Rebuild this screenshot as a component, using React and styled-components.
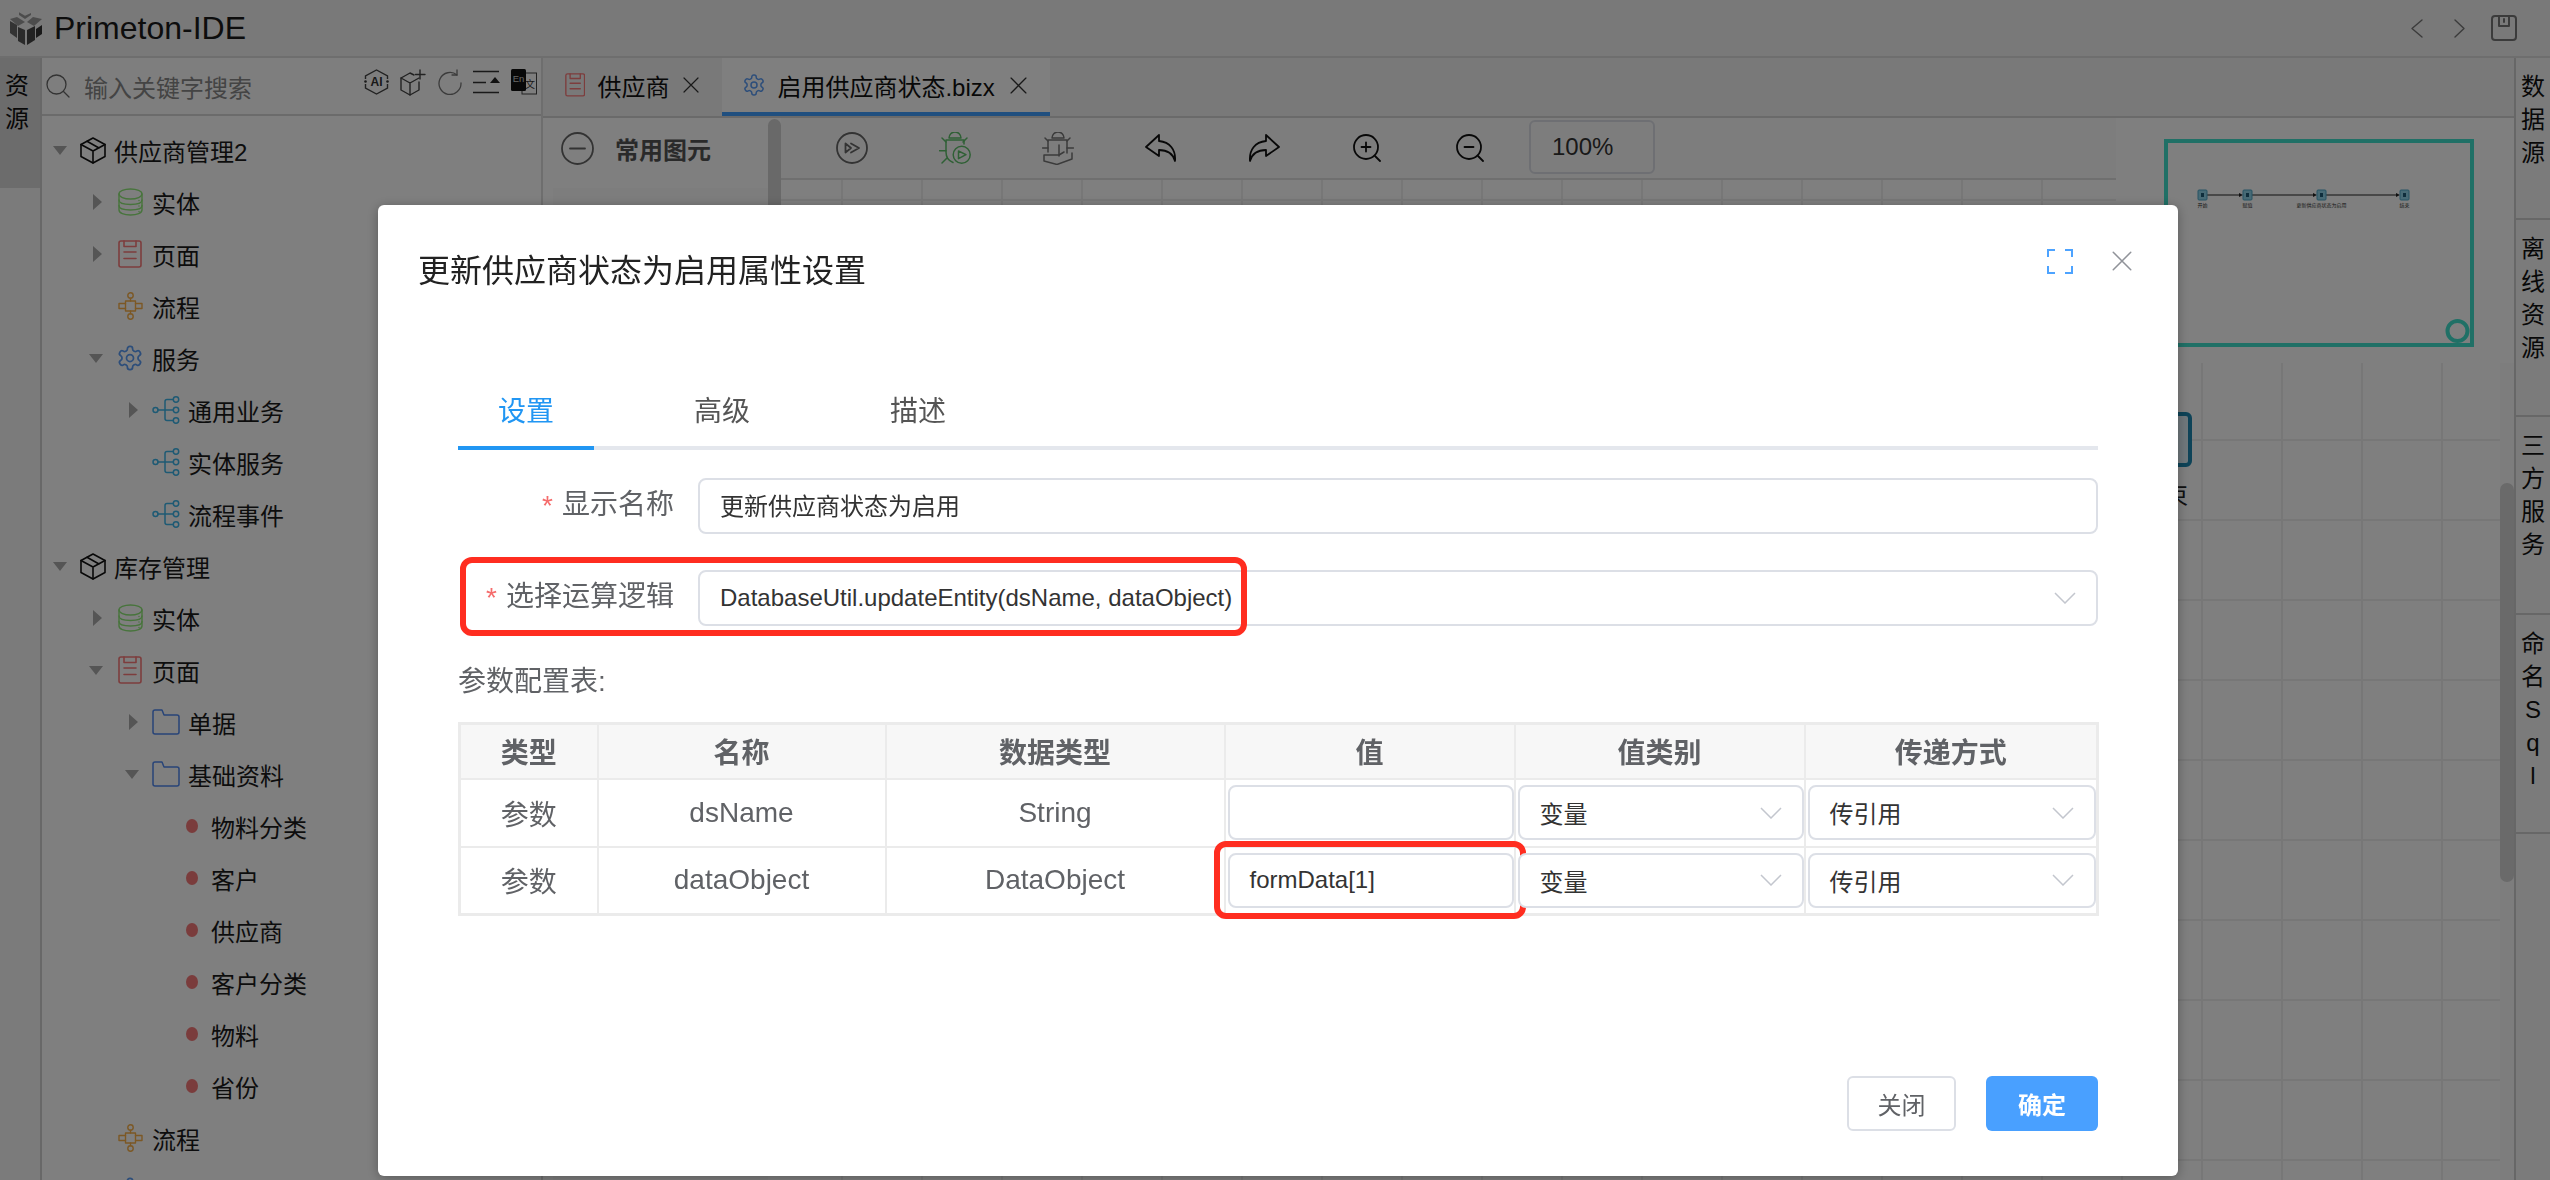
import React from 'react';
import styled, { createGlobalStyle } from 'styled-components';

const Global = createGlobalStyle`
  html, body { margin: 0; padding: 0; height: 100%; overflow: hidden; background: #fff; }
  body { font-family: "Liberation Sans", "Noto Sans CJK SC", sans-serif; color: #1a1a1a; }
  * { box-sizing: border-box; }
`;

const Page = styled.div`
  width: 100vw; height: 100vh; display: flex; flex-direction: column; overflow: hidden;
`;
const Header = styled.header`
  height: 58px; flex: none; display: flex; align-items: center; padding: 0 33px 0 9px;
  background: #f2f2f2; border-bottom: 2px solid #dcdcdc;
`;
const AppTitle = styled.div`font-size: 32px; margin-left: 11px; color: #1a1a1a;`;
const HeaderTools = styled.div`
  margin-left: auto; display: flex; align-items: center; color: #777; gap: 26px;
`;
const Pager = styled.span`display: flex; gap: 31px;`;
const Body = styled.div`flex: 1; display: flex; min-height: 0;`;

const LeftRail = styled.nav`
  width: 42px; flex: none; background: #f6f6f6; border-right: 2px solid #d0d0d0;
`;
const RailTab = styled.div`
  height: 130px; padding: 11px 6px 0 0; background: ${p => (p.$active ? '#d9d9d9' : 'transparent')};
`;
const RailChar = styled.span`
  display: block; font-size: 24px; line-height: 33px; text-align: center; color: #111;
`;

const TreePanel = styled.aside`
  width: 501px; flex: none; display: flex; flex-direction: column; overflow: hidden;
  background: #fff; border-right: 2px solid #dcdcdc;
`;
const SearchRow = styled.div`
  height: 58px; flex: none; display: flex; align-items: center; padding: 0 4px 0 4px;
  background: #fdfdfd; border-bottom: 2px solid #d6d6d6;
`;
const Placeholder = styled.span`font-size: 24px; color: #888; margin-left: 14px;`;
const SearchTools = styled.div`
  margin-left: auto; display: flex; gap: 11px; align-items: center; margin-bottom: 8px;
`;
const TreeList = styled.div`flex: 1; padding-top: 8px; overflow: hidden; position: relative;`;
const TreeRow = styled.div`
  height: 52px; display: flex; align-items: center; padding-left: ${p => 10 + p.$level * 36}px;
`;
const CaretSlot = styled.span`
  width: 16px; flex: none; margin-right: 12px; display: flex; justify-content: center;
`;
const Caret = styled.i`
  display: block; width: 0; height: 0;
  ${p => (p.$dir === 'down'
    ? 'border-left: 7px solid transparent; border-right: 7px solid transparent; border-top: 9px solid #aaa;'
    : 'margin-left: 3px; border-top: 8px solid transparent; border-bottom: 8px solid transparent; border-left: 9px solid #aaa;')}
`;
const IconSlot = styled.span`
  width: ${p => p.$w}px; flex: none; display: flex; justify-content: center;
`;
const TreeLabel = styled.span`font-size: 24px; margin-left: 8px; color: #1a1a1a; white-space: nowrap;`;
const LeafDot = styled.i`
  display: block; width: 12px; height: 14px; border-radius: 50%; background: #f47878;
  margin: 0 5px 0 -2px; flex: none;
`;

const Main = styled.main`flex: 1; min-width: 0; display: flex; flex-direction: column;`;
const TabBar = styled.div`
  height: 60px; flex: none; display: flex; background: #f2f2f2; border-bottom: 2px solid #d4d4d4;
`;
const FileTab = styled.div`
  height: 58px; display: flex; align-items: center; padding: 0 23px 0 ${p => (p.$active ? 20 : 22)}px;
  font-size: 24px; color: #111; background: ${p => (p.$active ? '#fff' : 'transparent')};
  border-bottom: 4px solid ${p => (p.$active ? '#409eff' : 'transparent')};
`;
const FileTabLabel = styled.span`margin: 0 ${p => (p.$active ? 15 : 14)}px 0 ${p => (p.$active ? 11 : 12)}px;`;

const Editor = styled.div`flex: 1; display: flex; min-height: 0;`;
const Palette = styled.div`
  width: 238px; flex: none; display: flex; background: #fff; position: relative;
`;
const PaletteInner = styled.div`flex: 1; min-width: 0; display: flex; flex-direction: column;`;
const PaletteHead = styled.div`
  height: 70px; flex: none; display: flex; align-items: center; padding: 0 0 10px 18px; gap: 21px;
  font-size: 24px; font-weight: 700; color: #555;
`;
const PaletteBlock = styled.div`flex: 1; margin-left: 10px; background: #fafafa;`;
const PaletteThumb = styled.div`
  width: 13px; height: 200px; margin-top: 1px; flex: none; background: #d2d2d2; border-radius: 7px;
`;
const Workspace = styled.div`flex: 1; min-width: 0; display: flex; flex-direction: column; position: relative;`;
const Toolbar = styled.div`
  height: 62px; flex: none; display: flex; align-items: center; padding-left: 55px; gap: 71px;
  background: #fbfbfb; border-bottom: 2px solid #dedede;
`;
const ToolIcon = styled.span`width: 32px; height: 34px; flex: none; display: flex; justify-content: center; align-items: center;`;
const ZoomBox = styled.div`
  width: 126px; height: 54px; margin: -2px 0 0 -28px; border: 2px solid #dcdfe6; border-radius: 6px;
  display: flex; align-items: center; padding-left: 21px; font-size: 24px; color: #333;
`;
const Canvas = styled.div`flex: 1; display: flex; min-height: 0;`;
const GridArea = styled.div`
  flex: 1; position: relative;
  background-color: #fff;
  background-image: linear-gradient(#efefef 2px, transparent 2px), linear-gradient(90deg, #efefef 2px, transparent 2px);
  background-size: 80px 80px;
  background-position: 60px 19px;
`;
const FlowNode = styled.div`
  position: absolute; left: 1356px; top: 232px; width: 55px; height: 55px; border: 4px solid #1c87b0;
  border-radius: 6px; background: #dff0f8;
`;
const FlowLabel = styled.div`
  position: absolute; left: 1359px; top: 296px; font-size: 24px; color: #222;
`;
const ScrollTrack = styled.div`width: 14px; flex: none; background: #fafafa;`;
const ScrollThumb = styled.div`margin-top: 303px; height: 399px; border-radius: 7px; background: #d4d4d4;`;
const MiniPanel = styled.div`
  position: absolute; top: 0; right: 0; width: 398px; height: 245px; background: #fff;
  padding: 21px 0 0 48px;
`;
const MiniMap = styled.svg`display: block;`;

const RightRail = styled.nav`
  width: 36px; flex: none; background: #f6f6f6; border-left: 2px solid #cfcfcf; padding-left: 0;
`;
const RailSection = styled.div`
  height: ${p => p.$h}px; padding-top: 12px; border-bottom: 2px solid #cfcfcf;
`;

/* dialog */
const Overlay = styled.div`
  position: fixed; inset: 0; background: rgba(0, 0, 0, 0.5); display: flex; align-items: flex-start;
  padding: 205px 0 0 378px;
`;
const Modal = styled.section`
  width: 1800px; height: 971px; background: #fff; border-radius: 6px; display: flex; flex-direction: column;
  box-shadow: 0 2px 12px rgba(0, 0, 0, 0.3);
`;
const ModalHead = styled.div`
  height: 126px; flex: none; display: flex; align-items: center; padding: 0 46px 0 40px;
`;
const ModalTitle = styled.h2`margin: 0; font-size: 32px; font-weight: 400; color: #222;`;
const ModalTools = styled.div`margin: -14px 0 0 auto; display: flex; align-items: center; gap: 39px;`;
const ModalBody = styled.div`flex: 1; padding: 45px 80px 0;`;
const TabNav = styled.div`display: flex; gap: 60px; border-bottom: 4px solid #e4e7ed;`;
const DialogTab = styled.div`
  width: 136px; height: 74px; margin-bottom: -4px; padding-bottom: 4px; display: flex; align-items: center; justify-content: center;
  font-size: 28px; color: ${p => (p.$active ? '#2196f3' : '#555')};
  border-bottom: 4px solid ${p => (p.$active ? '#2196f3' : 'transparent')};
`;
const FormRow = styled.div`
  display: flex; margin-top: ${p => p.$top}px; position: relative;
`;
const FormLabel = styled.label`
  width: 240px; flex: none; padding: 0 24px 8px 0; display: flex; align-items: center; justify-content: flex-end;
  font-size: 28px; color: #606266;
`;
const Star = styled.span`color: #f56c6c; margin-right: 9px; position: relative; top: 4px;`;
const Field = styled.div`
  flex: 1; height: ${p => p.$h || 56}px; border: 2px solid #dcdfe6; border-radius: 8px; background: #fff;
  display: flex; align-items: center; padding: 0 20px ${p => (p.$lift ? 3 : 0)}px; font-size: 24px; color: #333; position: relative;
  white-space: nowrap; min-width: 0;
`;
const Chevron = styled.svg`margin-left: auto; flex: none; color: #c3c6ce;`;
const Mark = styled.div`
  position: absolute; border: 6px solid #ff2d20; border-radius: 12px; pointer-events: none;
`;
const LogicMark = styled(Mark)`left: 2px; top: -13px; width: 787px; height: 79px;`;
const ValueMark = styled(Mark)`left: -16px; top: -14px; width: 312px; height: 78px;`;
const TableCaption = styled.div`margin-top: 36px; height: 40px; line-height: 40px; font-size: 28px; color: #606266;`;
const ParamTable = styled.table`
  margin-top: 20px; width: 1638px; table-layout: fixed; border-collapse: collapse; border: 3px solid #ebebeb;
`;
const HeadCell = styled.th`
  height: 55px; padding: 0; border: 2px solid #ebebeb; background: #f7f7f7; font-size: 28px; font-weight: 700; color: #606266;
`;
const Cell = styled.td`
  height: 68px; padding: 0; border: 2px solid #ebebeb; font-size: 28px; color: #606266; text-align: center;
`;
const FieldCell = styled.td`
  height: 68px; padding: 0 0 0 2px; border: 2px solid #ebebeb;
`;
const ModalFoot = styled.div`
  flex: none; display: flex; justify-content: flex-end; gap: 30px; padding: 0 80px 45px;
`;
const PlainButton = styled.button`
  width: 109px; height: 55px; font: inherit; font-size: 24px; color: #606266; background: #fff;
  border: 2px solid #dcdfe6; border-radius: 6px;
`;
const PrimaryButton = styled.button`
  width: 112px; height: 55px; font: inherit; font-size: 24px; font-weight: 700; color: #fff; background: #49a0ff;
  border: 0; border-radius: 6px;
`;

/* drawings */
const Svg = ({ w, h, vb, children, color = 'currentColor', sw = 1.5 }) => (
  <svg width={w} height={h} viewBox={vb} fill="none" stroke={color} strokeWidth={sw} strokeLinecap="round" strokeLinejoin="round">{children}</svg>
);

const Logo = () => (
  <svg width="34" height="33" viewBox="0 0 34 33">
    <polygon points="10,0.3 16,3.7 22,1 22,3 16,7 10,3" fill="#999" />
    <polygon points="1,7 8,5 16,10 9,14" fill="#999" />
    <polygon points="33,7 24,5 18,10 25,14" fill="#999" />
    <polygon points="1,9 8,13 8,26 1,21" fill="#666" />
    <polygon points="9,15 16,18 16,33 9,29" fill="#555" />
    <polygon points="18,18 26,14 26,28 18,33" fill="#444" />
    <polygon points="27,17 33,13 33,22 27,26" fill="#333" />
  </svg>
);
const SearchIcon = () => (
  <Svg w="24" h="24" vb="0 0 24 24" sw="1.3" color="#666"><circle cx="10.5" cy="10.5" r="9.5" /><path d="M17.5 17.5L23 23" /></Svg>
);
const AiIcon = () => (
  <svg width="25" height="26" viewBox="0 0 25 26" fill="none" stroke="#444" strokeWidth="1.4">
    <path d="M1.5 10V7L12.5 1L23.5 7V10M23.5 15V19L12.5 25L1.5 19V15" />
    <circle cx="1.5" cy="12.5" r="1.3" fill="#333" stroke="none" />
    <circle cx="23.5" cy="12.5" r="1.3" fill="#333" stroke="none" />
    <text x="12.5" y="17" fontSize="12" fontWeight="700" fill="#333" stroke="none" textAnchor="middle" fontFamily="Liberation Sans">AI</text>
  </svg>
);
const CubePlus = () => (
  <Svg w="27" h="27" vb="0 0 27 27" sw="1.4" color="#444"><path d="M14 6L10 4L1 9V21L10 26L19 21V13" /><path d="M1 9L10 14L19 9M10 14V26" /><path d="M20 1V10M15.5 5.5H25" /></Svg>
);
const RefreshIcon = () => (
  <Svg w="24" h="26" vb="0 0 24 26" sw="1.3" color="#777"><path d="M19 6A11 11 0 1 0 23 14" /><path d="M19 1V6H14" /></Svg>
);
const CollapseIcon = () => (
  <svg width="27" height="24" viewBox="0 0 27 24" fill="none" stroke="#333" strokeWidth="1.7">
    <path d="M0 1.5H26M0 12.5H13M0 22.5H26" /><polygon points="22,7 27,13 17,13" fill="#222" stroke="none" />
  </svg>
);
const LangIcon = () => (
  <svg width="26" height="26" viewBox="0 0 26 26">
    <rect x="11" y="4" width="14.5" height="21" fill="none" stroke="#444" strokeWidth="1" />
    <text x="19" y="19" fontSize="10" fill="#333" textAnchor="middle" fontFamily="Noto Sans CJK SC">文</text>
    <rect x="0" y="0" width="15" height="22" rx="1.5" fill="#111" />
    <text x="7.5" y="13" fontSize="9.5" fill="#ccc" textAnchor="middle" fontFamily="Liberation Sans">En</text>
  </svg>
);
const BoxIcon = () => (
  <Svg w="26" h="27" vb="0 0 26 27" sw="1.6" color="#111"><path d="M13 1L25 7.5V19.5L13 26L1 19.5V7.5Z" /><path d="M1 7.5L13 14L25 7.5M13 14V26M7 4.3L19 11" /></Svg>
);
const DbIcon = () => (
  <Svg w="25" h="28" vb="0 0 25 28" sw="1.4" color="#8fe878">
    <ellipse cx="12.5" cy="6" rx="11.5" ry="5" /><path d="M1 6V22C1 25 6 27 12.5 27S24 25 24 22V6" />
    <path d="M1 12C1 15 6 16.5 12.5 16.5S24 15 24 12M1 17.5C1 20.5 6 22 12.5 22S24 20.5 24 17.5" />
    <path d="M21 12.5V12.6M21 18V18.1M21 23.5V23.6" />
  </Svg>
);
const PageIcon = ({ s = 1 }) => (
  <Svg w={24 * s} h={28 * s} vb="0 0 24 28" sw="1.6" color="#fa7a7a"><rect x="1" y="1" width="22" height="26" rx="2" /><path d="M6 1V6.5H18V1M6 12H18M6 18.5H18" /></Svg>
);
const FlowIcon = () => (
  <Svg w="25" h="28" vb="0 0 25 28" sw="1.4" color="#f8b04a"><circle cx="12.5" cy="3.5" r="2.7" /><circle cx="12.5" cy="24.5" r="2.7" /><path d="M12.5 6.2V9M12.5 19V21.8" /><rect x="7.5" y="9" width="10" height="10" /><path d="M7.5 11.5H1V16.5H7.5M17.5 11.5H24V16.5H17.5" /></Svg>
);
const GearIcon = ({ c = '#5a9cf5', s = 28 }) => (
  <svg width={s} height={s} viewBox="0 0 24 24" fill="none" stroke={c} strokeWidth="1.5" strokeLinejoin="round">
    <path d="M12.22 2h-.44a2 2 0 0 0-2 2v.18a2 2 0 0 1-1 1.73l-.43.25a2 2 0 0 1-2 0l-.15-.08a2 2 0 0 0-2.73.73l-.22.38a2 2 0 0 0 .73 2.73l.15.1a2 2 0 0 1 1 1.72v.51a2 2 0 0 1-1 1.74l-.15.09a2 2 0 0 0-.73 2.73l.22.38a2 2 0 0 0 2.73.73l.15-.08a2 2 0 0 1 2 0l.43.25a2 2 0 0 1 1 1.73V20a2 2 0 0 0 2 2h.44a2 2 0 0 0 2-2v-.18a2 2 0 0 1 1-1.73l.43-.25a2 2 0 0 1 2 0l.15.08a2 2 0 0 0 2.73-.73l.22-.39a2 2 0 0 0-.73-2.73l-.15-.08a2 2 0 0 1-1-1.74v-.5a2 2 0 0 1 1-1.74l.15-.09a2 2 0 0 0 .73-2.73l-.22-.38a2 2 0 0 0-2.73-.73l-.15.08a2 2 0 0 1-2 0l-.43-.25a2 2 0 0 1-1-1.73V4a2 2 0 0 0-2-2z" />
    <circle cx="12" cy="12" r="3" />
  </svg>
);
const ServiceIcon = () => (
  <Svg w="28" h="28" vb="0 0 28 28" sw="1.5" color="#3cb4e8"><circle cx="3.5" cy="14" r="2.5" /><circle cx="24" cy="3.5" r="2.7" /><circle cx="24" cy="14" r="2.7" /><circle cx="24" cy="24.5" r="2.7" /><path d="M6 14H21M13 14V5.5C13 4 14 3.5 15 3.5H21M13 14V22.5C13 24 14 24.5 15 24.5H21" /></Svg>
);
const FolderIcon = () => (
  <Svg w="28" h="26" vb="0 0 28 26" sw="1.5" color="#5088f0"><path d="M1 3C1 1.8 1.8 1 3 1H10L12 6H25C26.2 6 27 6.8 27 8V23C27 24.2 26.2 25 25 25H3C1.8 25 1 24.2 1 23Z" /></Svg>
);
const CloseX = ({ s = 16, c = '#333', sw = 1.2 }) => (
  <Svg w={s} h={s} vb="0 0 16 16" sw={sw} color={c}><path d="M1 1L15 15M15 1L1 15" /></Svg>
);
const MinusCircle = () => (
  <Svg w="33" h="33" vb="0 0 33 33" sw="1.8" color="#666"><circle cx="16.5" cy="16.5" r="15.5" /><path d="M9 16.5H24" /></Svg>
);
const PlayCircle = () => (
  <Svg w="32" h="32" vb="0 0 32 32" sw="1.8" color="#666"><circle cx="16" cy="16" r="15" /><path d="M9.5 11.5L15 16L9.5 20.5ZM15 11.5L23 16L15 20.5" /></Svg>
);
const BugRun = () => (
  <Svg w="32" h="33" vb="0 0 32 33" sw="1.5" color="#5fc06b">
    <path d="M10 6A6 6 0 0 1 22 6Z" />
    <path d="M7 8H25V12M7 8V20C7 25 10 29 14 30.5" />
    <path d="M3 6L7 10M28 6L24 10M0.5 18.7H7M3 31L8 26" />
    <circle cx="22.7" cy="22.7" r="8.5" />
    <path d="M19.5 19L27 22.7L19.5 26.7Z" />
  </Svg>
);
const BugStep = () => (
  <Svg w="32" h="33" vb="0 0 32 33" sw="1.5" color="#777">
    <path d="M10 6A6 6 0 0 1 22 6Z" />
    <path d="M6 8H25V21M6 8V20" />
    <path d="M3 6L6 9M28 6L25 9M0.5 16H6M25 16H31.5M17 13V24" />
    <path d="M2 23H17L22 20M2 23V29L15 32.5L30 27V21" />
  </Svg>
);
const UndoIcon = ({ flip }) => (
  <svg width="32" height="28" viewBox="0 0 32 28" fill="none" stroke="#111" strokeWidth="1.8" strokeLinejoin="round">
    <g transform={flip ? 'translate(32 0) scale(-1 1)' : undefined}>
      <path d="M14 1L1 13L14 22V16C23 16 28 20 30 27C31 16 25 8 14 7Z" />
    </g>
  </svg>
);
const ZoomIcon = ({ plus }) => (
  <Svg w="28" h="28" vb="0 0 28 28" sw="1.8" color="#111">
    <circle cx="13" cy="13" r="12" /><path d="M22 22L27 27M8.5 13H17.5" />{plus && <path d="M13 8.5V17.5" />}
  </Svg>
);
const ChevronLeft = () => (
  <Svg w="12" h="19" vb="0 0 12 19" sw="1.4"><path d="M11 1L1 9.5L11 18" /></Svg>
);
const ChevronRight = () => (
  <Svg w="11" h="19" vb="0 0 11 19" sw="1.4"><path d="M1 1L10 9.5L1 18" /></Svg>
);
const SaveIcon = () => (
  <Svg w="26" h="26" vb="0 0 26 26" sw="2"><rect x="1" y="1" width="24" height="24" rx="3" /><path d="M8 1V11H18V1M13 4V7" /></Svg>
);
const ExpandIcon = () => (
  <svg width="26" height="25" viewBox="0 0 26 25" fill="none" stroke="#4da3ff" strokeWidth="2">
    <path d="M1 8V1H8M18 1H25V8M25 17V24H18M8 24H1V17" />
  </svg>
);
const SelectArrow = () => (
  <Chevron width="22" height="12" viewBox="0 0 22 12" fill="none" stroke="currentColor" strokeWidth="1.5"><path d="M1 1L11 11L21 1" /></Chevron>
);
const MiniNode = ({ x, label }) => (
  <g>
    <rect x={x} y="51" width="9" height="10" rx="1" fill="#8fd4ea" stroke="#4ca6c8" strokeWidth="1" />
    <rect x={x + 3} y="54" width="3" height="4" fill="#1f5d78" />
    <text x={x + 4.5} y="68" fontSize="5" fill="#333" textAnchor="middle" fontFamily="Noto Sans CJK SC">{label}</text>
  </g>
);
const MiniEdge = ({ from, to }) => (
  <g>
    <path d={`M${from} 56H${to - 3}`} stroke="#222" strokeWidth="1" />
    <polygon points={`${to - 4},54 ${to},56 ${to - 4},58`} fill="#222" />
  </g>
);

const TREE = [
  { l: 0, a: 'down', i: 'box', t: '供应商管理2' },
  { l: 1, a: 'right', i: 'db', t: '实体' },
  { l: 1, a: 'right', i: 'page', t: '页面' },
  { l: 1, i: 'flow', t: '流程' },
  { l: 1, a: 'down', i: 'gear', t: '服务' },
  { l: 2, a: 'right', i: 'svc', t: '通用业务' },
  { l: 2, i: 'svc', t: '实体服务' },
  { l: 2, i: 'svc', t: '流程事件' },
  { l: 0, a: 'down', i: 'box', t: '库存管理' },
  { l: 1, a: 'right', i: 'db', t: '实体' },
  { l: 1, a: 'down', i: 'page', t: '页面' },
  { l: 2, a: 'right', i: 'folder', t: '单据' },
  { l: 2, a: 'down', i: 'folder', t: '基础资料' },
  { l: 3, i: 'dot', t: '物料分类' },
  { l: 3, i: 'dot', t: '客户' },
  { l: 3, i: 'dot', t: '供应商' },
  { l: 3, i: 'dot', t: '客户分类' },
  { l: 3, i: 'dot', t: '物料' },
  { l: 3, i: 'dot', t: '省份' },
  { l: 1, i: 'flow', t: '流程' },
  { l: 1, a: 'right', i: 'gear', t: '服务' },
];
const TREE_ICON = {
  box: <BoxIcon />, db: <DbIcon />, page: <PageIcon />, flow: <FlowIcon />, gear: <GearIcon />,
  svc: <ServiceIcon />, folder: <FolderIcon />,
};

const Stack = ({ text }) => Array.from(text).map((c, i) => <RailChar key={i}>{c}</RailChar>);

const COLS = [138, 288, 339, 290, 290, 293];
const HEADS = ['类型', '名称', '数据类型', '值', '值类别', '传递方式'];
const PARAMS = [
  { name: 'dsName', type: 'String', value: '', marked: false },
  { name: 'dataObject', type: 'DataObject', value: 'formData[1]', marked: true },
];

export default function App() {
  return (
    <Page>
      <Global />
      <Header>
        <Logo />
        <AppTitle>Primeton-IDE</AppTitle>
        <HeaderTools>
          <Pager><ChevronLeft /><ChevronRight /></Pager>
          <SaveIcon />
        </HeaderTools>
      </Header>
      <Body>
        <LeftRail>
          <RailTab $active><Stack text="资源" /></RailTab>
        </LeftRail>
        <TreePanel>
          <SearchRow>
            <SearchIcon />
            <Placeholder>输入关键字搜索</Placeholder>
            <SearchTools>
              <AiIcon /><CubePlus /><RefreshIcon /><CollapseIcon /><LangIcon />
            </SearchTools>
          </SearchRow>
          <TreeList>
            {TREE.map((n, i) => (
              <TreeRow key={i} $level={n.l}>
                <CaretSlot>{n.a && <Caret $dir={n.a} />}</CaretSlot>
                {n.i === 'dot'
                  ? <LeafDot />
                  : <IconSlot $w={n.l === 0 ? 26 : 28}>{TREE_ICON[n.i]}</IconSlot>}
                <TreeLabel>{n.t}</TreeLabel>
              </TreeRow>
            ))}
          </TreeList>
        </TreePanel>
        <Main>
          <TabBar>
            <FileTab>
              <PageIcon s={0.85} />
              <FileTabLabel>供应商</FileTabLabel>
              <CloseX />
            </FileTab>
            <FileTab $active>
              <GearIcon s={24} />
              <FileTabLabel $active>启用供应商状态.bizx</FileTabLabel>
              <CloseX s={17} />
            </FileTab>
          </TabBar>
          <Editor>
            <Palette>
              <PaletteInner>
                <PaletteHead><MinusCircle />常用图元</PaletteHead>
                <PaletteBlock />
              </PaletteInner>
              <PaletteThumb />
            </Palette>
            <Workspace>
              <Toolbar>
                <ToolIcon><PlayCircle /></ToolIcon>
                <ToolIcon><BugRun /></ToolIcon>
                <ToolIcon><BugStep /></ToolIcon>
                <ToolIcon><UndoIcon /></ToolIcon>
                <ToolIcon><UndoIcon flip /></ToolIcon>
                <ToolIcon><ZoomIcon plus /></ToolIcon>
                <ToolIcon><ZoomIcon /></ToolIcon>
                <ZoomBox>100%</ZoomBox>
              </Toolbar>
              <Canvas>
                <GridArea>
                  <FlowNode />
                  <FlowLabel>结束</FlowLabel>
                </GridArea>
                <ScrollTrack><ScrollThumb /></ScrollTrack>
              </Canvas>
              <MiniPanel>
                <MiniMap width="310" height="208" viewBox="0 0 310 208">
                  <rect x="2" y="2" width="306" height="204" fill="none" stroke="#41e0cd" strokeWidth="4" />
                  <MiniEdge from={43} to={79} />
                  <MiniEdge from={88} to={153} />
                  <MiniEdge from={162} to={236} />
                  <MiniNode x={34} label="开始" />
                  <MiniNode x={79} label="赋值" />
                  <MiniNode x={153} label="更新供应商状态为启用" />
                  <MiniNode x={236} label="结束" />
                  <ellipse cx="293.5" cy="192" rx="10" ry="10" fill="none" stroke="#41e0cd" strokeWidth="4" />
                </MiniMap>
              </MiniPanel>
            </Workspace>
          </Editor>
        </Main>
        <RightRail>
          <RailSection $h={162}><Stack text="数据源" /></RailSection>
          <RailSection $h={197}><Stack text="离线资源" /></RailSection>
          <RailSection $h={198}><Stack text="三方服务" /></RailSection>
          <RailSection $h={219}><Stack text="命名Sql" /></RailSection>
        </RightRail>
      </Body>

      <Overlay>
        <Modal>
          <ModalHead>
            <ModalTitle>更新供应商状态为启用属性设置</ModalTitle>
            <ModalTools>
              <ExpandIcon />
              <CloseX s={20} c="#909399" sw={1.2} />
            </ModalTools>
          </ModalHead>
          <ModalBody>
            <TabNav>
              <DialogTab $active>设置</DialogTab>
              <DialogTab>高级</DialogTab>
              <DialogTab>描述</DialogTab>
            </TabNav>
            <FormRow $top={28}>
              <FormLabel><Star>*</Star>显示名称</FormLabel>
              <Field $lift>更新供应商状态为启用</Field>
            </FormRow>
            <FormRow $top={36}>
              <FormLabel><Star>*</Star>选择运算逻辑</FormLabel>
              <Field>DatabaseUtil.updateEntity(dsName, dataObject)<SelectArrow /></Field>
              <LogicMark />
            </FormRow>
            <TableCaption>参数配置表:</TableCaption>
            <ParamTable>
              <colgroup>{COLS.map((w, i) => <col key={i} width={w} />)}</colgroup>
              <thead>
                <tr>{HEADS.map(h => <HeadCell key={h}>{h}</HeadCell>)}</tr>
              </thead>
              <tbody>
                {PARAMS.map(p => (
                  <tr key={p.name}>
                    <Cell>参数</Cell>
                    <Cell>{p.name}</Cell>
                    <Cell>{p.type}</Cell>
                    <FieldCell>
                      <Field $h={55}>{p.value}{p.marked && <ValueMark />}</Field>
                    </FieldCell>
                    <FieldCell><Field $h={55}>变量<SelectArrow /></Field></FieldCell>
                    <FieldCell><Field $h={55}>传引用<SelectArrow /></Field></FieldCell>
                  </tr>
                ))}
              </tbody>
            </ParamTable>
          </ModalBody>
          <ModalFoot>
            <PlainButton>关闭</PlainButton>
            <PrimaryButton>确定</PrimaryButton>
          </ModalFoot>
        </Modal>
      </Overlay>
    </Page>
  );
}
